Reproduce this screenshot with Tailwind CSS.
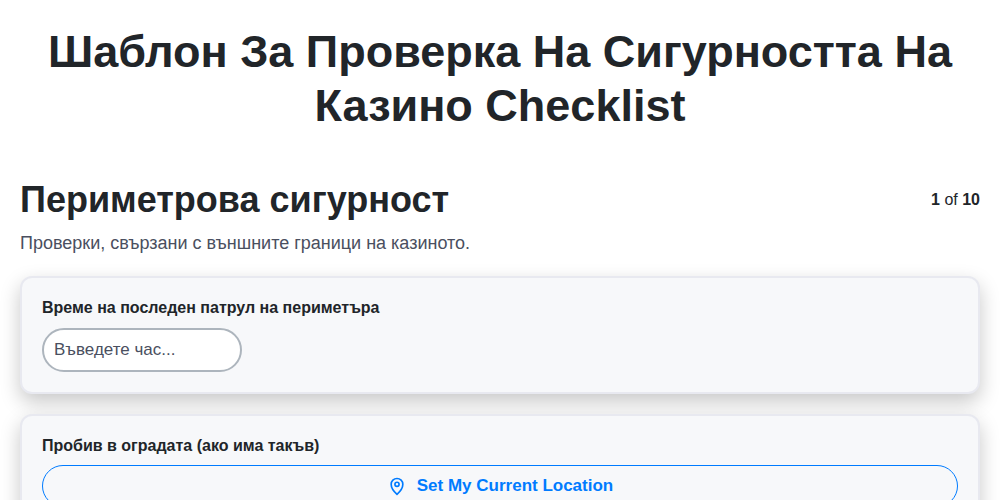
<!DOCTYPE html>
<html lang="en">
<head>
    <meta charset="UTF-8">
    <title>Checklist</title>
    <script src="https://cdn.jsdelivr.net/npm/@tailwindcss/browser@4"></script>
</head>
<body class="bg-white text-[#212529] font-['Liberation_Sans',sans-serif] h-[500px] overflow-hidden">
    <h1 class="text-center text-[45px] leading-[54px] font-bold px-5 pt-[25px] mb-[45px]">Шаблон За Проверка На Сигурността На Казино Checklist</h1>

    <div class="px-5">
        <div class="flex justify-between items-start">
            <h2 class="text-[36px] leading-[43px] font-bold">Периметрова сигурност</h2>
            <div class="text-base leading-6 mt-[10px]"><b>1</b> of <b>10</b></div>
        </div>
        <p class="text-[#4a4f60] text-lg leading-[27px] mt-[9px] mb-[19px]">Проверки, свързани с външните граници на казиното.</p>

        <div class="bg-[#f7f8fa] border-2 border-[#e8e9f0] rounded-xl shadow-[0_8px_20px_rgba(0,0,0,0.22)] px-5 pt-[18px] pb-5 mb-5">
            <label class="block font-bold text-base leading-6 mb-2">Време на последен патрул на периметъра</label>
            <input type="text" placeholder="Въведете час..." class="block w-[200px] h-11 border-2 border-[#adb5bd] rounded-3xl bg-white px-[10px] text-[17px] placeholder:text-[#4a4f60]">
        </div>

        <div class="bg-[#f7f8fa] border-2 border-[#e8e9f0] rounded-xl shadow-[0_8px_20px_rgba(0,0,0,0.22)] px-5 pt-[18px] pb-5">
            <label class="block font-bold text-base leading-6 mb-[7px]">Пробив в оградата (ако има такъв)</label>
            <button class="flex items-center justify-center gap-[10px] w-full h-[42px] border border-[#007bff] rounded-3xl text-[#007bff] font-bold text-[17px]">
                <svg class="w-5 h-5" viewBox="0 0 24 24" fill="none" stroke="currentColor" stroke-width="2" stroke-linecap="round" stroke-linejoin="round"><path d="M19 10c0 6-7 12-7 12s-7-6-7-12a7 7 0 0 1 14 0Z"/><circle cx="12" cy="10" r="2.5"/></svg>
                Set My Current Location
            </button>
        </div>
    </div>
</body>
</html>
